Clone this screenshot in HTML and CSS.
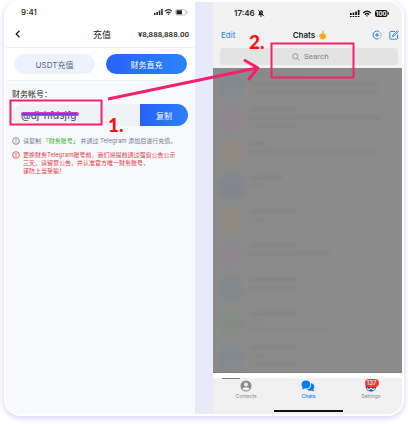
FILE: index.html
```html
<!DOCTYPE html>
<html lang="zh-CN">
<head>
<meta charset="utf-8">
<meta name="viewport" content="width=device-width, initial-scale=1">
<title>充值</title>
<link rel="stylesheet" href="styles.css">
</head>
<body>
<main class="card">
  <section class="phone pay">
    <div class="status">
      <span class="clock">9:41</span>
      <svg class="status-icons" width="36" height="8" viewBox="0 0 36 8" fill="#222">
        <rect x="1" y="5" width="1.5" height="2"/><rect x="3.4" y="4" width="1.5" height="3"/><rect x="5.8" y="2.5" width="1.5" height="4.5"/><rect x="8.2" y="1" width="1.5" height="6"/>
        <path d="M12 3.2Q15.5 0 19 3.2M13.5 5Q15.5 3.2 17.5 5" fill="none" stroke="#222" stroke-width="1.2"/><circle cx="15.5" cy="6.3" r=".8"/>
        <rect x="22.5" y="1.5" width="10.5" height="5.5" rx="1.5" fill="none" stroke="#aaa" stroke-width=".7"/><rect x="23.5" y="2.3" width="5.5" height="4"/><path d="M34 3v2.5" stroke="#aaa" stroke-width=".8"/>
      </svg>
    </div>
    <header class="pay-head">
      <button class="back" aria-label="返回"><svg width="6" height="8" viewBox="0 0 6 8" fill="none" stroke="#111" stroke-width="1.2"><path d="M4.5.8 1.2 4l3.3 3.2"/></svg></button>
      <h1>充值</h1>
      <span class="balance">¥8,888,888.00</span>
    </header>
    <div class="modes">
      <button class="mode">USDT充值</button>
      <button class="mode active">财务直充</button>
    </div>
    <div class="account">
      <label for="acct">财务帐号：</label>
      <div class="field">
        <input id="acct" value="@dj-hfdsjfg" readonly>
        <button class="copy">复制</button>
      </div>
      <p class="tip">
        <svg width="8" height="8" viewBox="0 0 8 8" fill="none" stroke="#70748a" stroke-width=".8"><circle cx="4" cy="4" r="3.3"/><path d="M4 2v2.6M4 5.2v.8"/></svg>
        <span>请复制 <b>「财务账号」</b> 并通过 Telegram 添加后进行充值。</span>
      </p>
      <p class="tip warn">
        <svg width="8" height="8" viewBox="0 0 8 8" fill="none" stroke="#e0363f" stroke-width=".8"><circle cx="4" cy="4" r="3.3"/><path d="M4 2v2.6M4 5.2v.8"/></svg>
        <span>更换财务Telegram账号前，我们将提前通过强窗公告公示<br>三天，请留意公告，并认准官方唯一财务账号，<br>谨防上当受骗！</span>
      </p>
    </div>
  </section>

  <section class="phone chats" lang="en">
    <div class="status">
      <span class="clock">17:46
        <svg width="8" height="8" viewBox="0 0 8 8"><path d="M1 6.3 2 5V3.2a2 2 0 0 1 4 0V5l1 1.3zM3 6.8h2a1 1 0 0 1-2 0z" fill="#222"/><path d="M1 .8l6 6.4" stroke="#222" stroke-width=".8"/><path d="M1.6.4l6 6.4" stroke="#f2f2f3" stroke-width=".5"/></svg></span>
      <svg class="status-icons" width="41" height="9" viewBox="0 0 41 9" fill="#111">
        <rect x="1" y="4" width="1.7" height="2"/><rect x="3.6" y="3.5" width="1.7" height="2.5"/><rect x="6.2" y="2.5" width="1.7" height="3.5"/><rect x="8.8" y="1" width="1.7" height="5"/>
        <path d="M1 7.5h1.7M3.6 7.5h1.7M6.2 7.5h1.7M8.8 7.5h1.7" stroke="#111" stroke-width="1"/>
        <path d="M14.2 4Q18 .2 21.8 4M15.8 5.6Q18 3.4 20.2 5.6" fill="none" stroke="#111" stroke-width="1.2"/><path d="M16.8 6.5h2.4L18 7.8z"/>
        <rect x="26" y="1" width="12.5" height="7" rx="2.2"/><path d="M39.5 3.5v2" stroke="#111"/>
        <text x="32.2" y="6.6" text-anchor="middle" class="charge">100</text>
      </svg>
    </div>
    <header class="chat-head">
      <a href="#edit">Edit</a>
      <h2>Chats
        <svg width="9" height="10" viewBox="0 0 9 10"><path d="M1 5.5Q2.5 3 4 3.5L4.5.8Q5.8 0 5.8 1.5L5.7 3.5Q8.5 4 8.2 6.5 8 9.5 4.5 9.5 1.5 9.3 1 5.5z" fill="#fbb52d"/><path d="M3 5.5q1-1.5 2 0t-1 2M6 5.5q1 1.5-.5 2.5" fill="none" stroke="#d98318" stroke-width=".6"/></svg></h2>
      <div class="actions">
        <button aria-label="Add story"><svg width="10" height="10" viewBox="0 0 10 10" fill="none" stroke="#2184d8"><path d="M6.3 1.2A4 4 0 1 0 6.3 8.8"/><path d="M6.3 1.2A4 4 0 0 1 6.3 8.8" stroke-dasharray="1.2 1.2"/><path d="M3 5h4M5 3v4"/></svg></button>
        <button aria-label="New chat"><svg width="10" height="10" viewBox="0 0 10 10" fill="none" stroke="#2184d8"><path d="M6 1.5H1.5q-.7 0-.7.7v6.3q0 .7.7.7h6.3q.7 0 .7-.7V4.5M3.5 6.5l.4-1.5L8.3.7l1 1L5 6.1z" stroke-width=".9"/></svg></button>
      </div>
    </header>
    <div class="search">
      <svg width="8" height="8" viewBox="0 0 8 8" fill="none" stroke="#858589" stroke-width=".8"><circle cx="3.3" cy="3.3" r="2.6"/><path d="M5.3 5.3 7.5 7.5"/></svg>
      <input type="text" aria-label="Search" placeholder="Search">
    </div>
    <div class="list">
      <div class="row"><i class="face blue"></i><div class="lines"><i></i><i class="long"></i><i class="long"></i></div></div>
      <div class="row"><i class="face pink"></i><div class="lines"><i class="dark"></i><i class="long dark"></i><i></i></div></div>
      <div class="row"><i class="face gold"></i><div class="lines"><i class="short dark"></i><i class="long"></i></div></div>
      <div class="row"><i class="face indigo"></i><div class="lines"><i class="mid dark"></i><i class="short"></i></div></div>
      <div class="row"><i class="face gold"></i><div class="lines"><i class="dark"></i><i class="short"></i></div></div>
      <div class="row"><i class="face pink"></i><div class="lines"><i class="dark"></i><i class="wide dark"></i></div></div>
      <div class="row"><i class="face blue"></i><div class="lines"><i class="dark"></i><i></i></div></div>
      <div class="row"><i class="face green"></i><div class="lines"><i class="dark"></i><i class="short"></i><i class="wide"></i></div></div>
      <div class="row"><i class="face blue"></i><div class="lines"><i class="dark"></i><i class="short"></i><i></i></div></div>
    </div>
    <nav class="tabs">
      <a href="#contacts"><svg width="12" height="12" viewBox="0 0 12 12"><circle cx="6" cy="6" r="5.5" fill="#8c8c8c"/><circle cx="6" cy="4.5" r="1.9" fill="#f1f1f1"/><path d="M2.4 9Q3 7.2 6 7.2T9.6 9Q8.2 10.5 6 10.5T2.4 9z" fill="#f1f1f1"/></svg>Contacts</a>
      <a href="#chats" class="on"><svg width="14" height="12" viewBox="0 0 14 12" fill="#087cf2"><path d="M10 3.2Q13.5 4 13.3 7q-.1 1.5-1 2.5l.7 1.9q-1.6 0-2.5-.8Q7.5 11.2 6 9.5q4.8-.8 4-6.3z"/><path d="M5 .5Q9.3.6 9.3 4.5T5 8.600q-.8 0-1.5-.2-1 .9-2.500.9.7-.9.7-1.700Q.5 6.500.5 4.500.6.6 5 .5z"/></svg>Chats</a>
      <a href="#settings"><span class="avatar"><svg width="12" height="12" viewBox="0 0 12 12"><circle cx="6" cy="6" r="5.5" fill="#27448c"/><path d="M2 8l2 2 2-2 2 2 2-2" fill="none" stroke="#dce4f6" stroke-width="1.2"/></svg><b class="badge">137</b></span>Settings</a>
    </nav>
  </section>

  <svg class="marks" viewBox="0 0 408 424" fill="none" stroke="#f5206e" aria-hidden="true">
    <path d="M23 114h54" stroke="#d33bc5" stroke-width="4" stroke-linecap="round"/>
    <path d="M23 114h53" stroke="#6548d8" stroke-width="2" stroke-linecap="round"/>
    <rect x="10.5" y="100.5" width="91" height="24" stroke-width="2"/>
    <rect x="271.5" y="43.5" width="82" height="34" stroke-width="2"/>
    <path d="M108 99 257 68" stroke-width="3"/>
    <path d="M245 60.5 258 68l-9 11" stroke-width="3" stroke-linecap="round" stroke-linejoin="round"/>
    <text x="108" y="132">1.</text>
    <text x="249" y="49">2.</text>
  </svg>
</main>
</body>
</html>
```
FILE: styles.css
```css
* { box-sizing: border-box; }
body {
  margin: 0;
  background: #fff;
  color: #222;
  font-family: Inter, "Noto Sans CJK SC", sans-serif;
  font-size: 8px;
}
h1, h2, p { margin: 0; }
button {
  padding: 0;
  border: 0;
  background: none;
  font: inherit;
  color: inherit;
}
a { color: inherit; text-decoration: none; }
svg { display: block; flex: none; }

.card {
  display: grid;
  grid-template-columns: 1fr 1fr;
  column-gap: 18px;
  margin: 0 4px 8px;
  border: 2px solid #fff;
  border-radius: 16px;
  background: #e6eaf9;
  box-shadow: 0 2px 6px #d5cff5;
  min-height: 416px;
}
.phone { display: flex; flex-direction: column; min-width: 0; }
.status { display: flex; justify-content: space-between; align-items: center; }
.clock { display: flex; align-items: center; gap: 2px; font-weight: 500; }

.pay { background: #f8f9fc; border-radius: 14px 0 0 14px; }
.pay .status { height: 19px; padding: 0 6px 0 15px; background: #fff; border-radius: 14px 0 0 0; }
.pay-head {
  display: grid;
  grid-template-columns: 1fr auto 1fr;
  align-items: center;
  height: 27px;
  padding: 0 6px 0 9px;
  background: #fff;
  border-bottom: 1px solid #f0f1f4;
}
.pay-head h1 { font-size: 9px; font-weight: 400; }
.balance { justify-self: end; font: 500 8px Roboto, sans-serif; }
.modes {
  display: grid;
  grid-template-columns: 1fr 1fr;
  gap: 11px;
  padding: 6px 8px;
  background: #fff;
  border-bottom: 1px solid #f0f1f4;
}
.mode { height: 20px; border-radius: 10px; background: #edf3fe; color: #5c6480; }
.mode.active { background: linear-gradient(90deg, #2863f8, #2a84fd); color: #fff; }
.account { padding: 7px 7px 0 6px; }
.account label { display: block; height: 16px; line-height: 12px; }
.field { display: flex; height: 22px; }
.field input {
  flex: 1;
  min-width: 0;
  padding: 0 9px;
  border: 0;
  border-radius: 11px 0 0 11px;
  background: #f0f1f5;
  color: #45454f;
  font: 10px Inter, sans-serif;
}
.copy { width: 48px; border-radius: 0 11px 11px 0; background: linear-gradient(90deg, #2861f7, #2a80fc); color: #fff; }
.tip { display: flex; gap: 3px; margin-top: 11px; font-size: 6px; line-height: 8px; color: #73788f; white-space: nowrap; }
.tip b { color: #32b629; font-weight: 400; }
.tip.warn { margin-top: 6px; color: #df4148; }

.chats { background: #f2f2f3; border-radius: 0 14px 14px 0; }
.chats .status { height: 22px; padding: 0 12px 0 21px; }
.chats .clock { font-size: 8px; font-weight: 600; }
.charge { fill: #fff; font: 700 6px Inter, sans-serif; }
.chat-head {
  display: grid;
  grid-template-columns: 1fr auto 1fr;
  align-items: center;
  height: 22px;
  padding: 0 3px 0 8px;
}
.chat-head > a { color: #2184d8; }
.chat-head h2 { display: flex; align-items: center; gap: 3px; font-size: 8px; font-weight: 600; }
.actions { display: flex; justify-content: flex-end; gap: 7px; }
.search {
  display: flex;
  justify-content: center;
  align-items: center;
  gap: 4px;
  height: 17px;
  margin: 2px 4px 3px 7px;
  padding-left: 10px;
  border-radius: 4px;
  background: #e3e3e4;
}
.search input { width: 32px; padding: 0; border: 0; background: none; font: 8px Roboto, sans-serif; }
.search input::placeholder { color: #858589; }
.list { flex: 1 1 0; overflow: hidden; background: #8b8b8b; border-bottom: 1px solid #828282; }
.row { display: flex; gap: 6px; height: 34px; padding: 4px 5px; }
.face { width: 26px; height: 26px; border-radius: 50%; filter: blur(2px); }
.blue { background: #828a8f; }
.pink { background: #8f858d; }
.gold { background: #908a82; }
.indigo { background: #83858e; }
.green { background: #848b85; }
.lines { display: flex; flex: 1; flex-direction: column; gap: 5px; padding-top: 2px; filter: blur(1px); }
.lines i { width: 46px; height: 3px; background: #888; }
.lines .dark { background: #858585; }
.lines .short { width: 16px; }
.lines .mid { width: 32px; }
.lines .wide { width: 80px; }
.lines .long { width: 130px; }
.tabs {
  display: grid;
  grid-template-columns: 1fr 1fr 1fr;
  height: 41px;
  padding: 2px 0 0 2px;
  border-top: 5px solid #fff;
  border-radius: 0 0 14px 0;
  background: linear-gradient(#777, #777) 9px 0 / 18px 1px no-repeat, linear-gradient(#111, #111) 61px 32px / 69px 2px no-repeat, #f0f0f0;
}
.tabs a { display: flex; flex-direction: column; align-items: center; gap: 1px; font-size: 5px; line-height: 7px; color: #8c8c8c; }
.tabs .on { color: #087cf2; font-weight: 500; }
.avatar { position: relative; }
.badge {
  position: absolute;
  left: 0;
  top: -1px;
  padding: 0 2px;
  border-radius: 4px;
  background: #fa3b30;
  color: #fff;
  font-size: 6px;
  font-weight: 500;
  line-height: 8px;
}
.marks { position: absolute; top: 0; left: 0; width: 100%; pointer-events: none; }
.marks text { fill: #f5130f; stroke: none; font: 900 19px Lato, sans-serif; }
```
